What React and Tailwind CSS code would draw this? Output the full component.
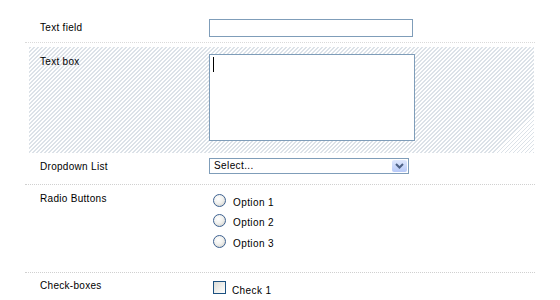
import React from "react";

const Label = ({ children, className = "" }) => (
  <div className={`w-[184px] shrink-0 pl-[15px] text-[10px] leading-[12px] tracking-[0.3px] text-black ${className}`}>
    {children}
  </div>
);

const Radio = ({ label }) => (
  <div className="flex h-[20px] items-start">
    <span className="h-[13px] w-[13px] rounded-full border border-[#3d6191] bg-[radial-gradient(circle_at_40%_35%,#ffffff_0%,#f1f1ee_45%,#c9c9c3_100%)]" />
    <span className="ml-[7px] mt-[3px] text-[10px] leading-[12px] tracking-[0.4px] text-black">{label}</span>
  </div>
);

export default function App() {
  return (
    <div className="h-[300px] w-[560px] overflow-hidden bg-white" style={{ fontFamily: '"Liberation Sans", Arial, sans-serif' }}>
      <div className="ml-[25px] w-[510px]">
        {/* text field */}
        <div className="flex items-start border-b border-dotted border-[#dadada] pb-[5px] pt-[19px]">
          <Label className="mt-[3px]">Text field</Label>
          <div className="h-[18px] w-[204px] border border-[#7f9db9] bg-white" />
        </div>

        {/* text box */}
        <div className="ml-[4px] mt-[4px] flex w-[505px] items-start bg-[repeating-linear-gradient(-45deg,#dce2e8_0px,#dce2e8_1.4px,#ffffff_1.4px,#ffffff_2.83px)] pb-[12px] pt-[7px]">
          <div className="mt-[2px] w-[180px] shrink-0 pl-[11px] text-[10px] leading-[12px] tracking-[0.3px] text-black">Text box</div>
          <div className="h-[87px] w-[206px] border border-[#7f9db9] bg-white pl-[3px] pt-[2px]">
            <div className="h-[15px] w-px bg-black" />
          </div>
        </div>

        {/* dropdown */}
        <div className="flex items-start border-b border-dotted border-[#d0d0d0] pb-[10px] pt-[5px]">
          <Label className="mt-[3px]">Dropdown List</Label>
          <div className="flex h-[16px] w-[200px] items-center justify-between border border-[#7f9db9] bg-white pl-[4px]">
            <span className="text-[10px] leading-[12px] tracking-[0.4px] text-black">Select...</span>
            <span className="mr-px flex h-[12px] w-[15px] items-center justify-center rounded-[2px] bg-[linear-gradient(180deg,#dfe8fd_0%,#b7c9f8_100%)]">
              <svg width="9" height="6" viewBox="0 0 9 6">
                <path d="M1 1 L4.5 4.5 L8 1" fill="none" stroke="#4d6185" strokeWidth="2" />
              </svg>
            </span>
          </div>
        </div>

        {/* radios */}
        <div className="flex items-start border-b border-dotted border-[#d0d0d0] pb-[17px] pt-[7px]">
          <Label className="mt-[1px]">Radio Buttons</Label>
          <div className="ml-[4px] mt-[2px] flex flex-col">
            <Radio label="Option 1" />
            <Radio label="Option 2" />
            <div className="mt-px">
              <Radio label="Option 3" />
            </div>
          </div>
        </div>

        {/* checkboxes */}
        <div className="flex items-start pt-[7px]">
          <Label>Check-boxes</Label>
          <div className="ml-[4px] mt-[1px] flex items-start">
            <span className="h-[13px] w-[13px] border border-[#1c5180] bg-[linear-gradient(135deg,#dcdcd7_0%,#f5f5f2_70%,#ffffff_100%)]" />
            <span className="ml-[6px] mt-[4px] text-[10px] leading-[12px] tracking-[0.4px] text-black">Check 1</span>
          </div>
        </div>
      </div>
    </div>
  );
}
